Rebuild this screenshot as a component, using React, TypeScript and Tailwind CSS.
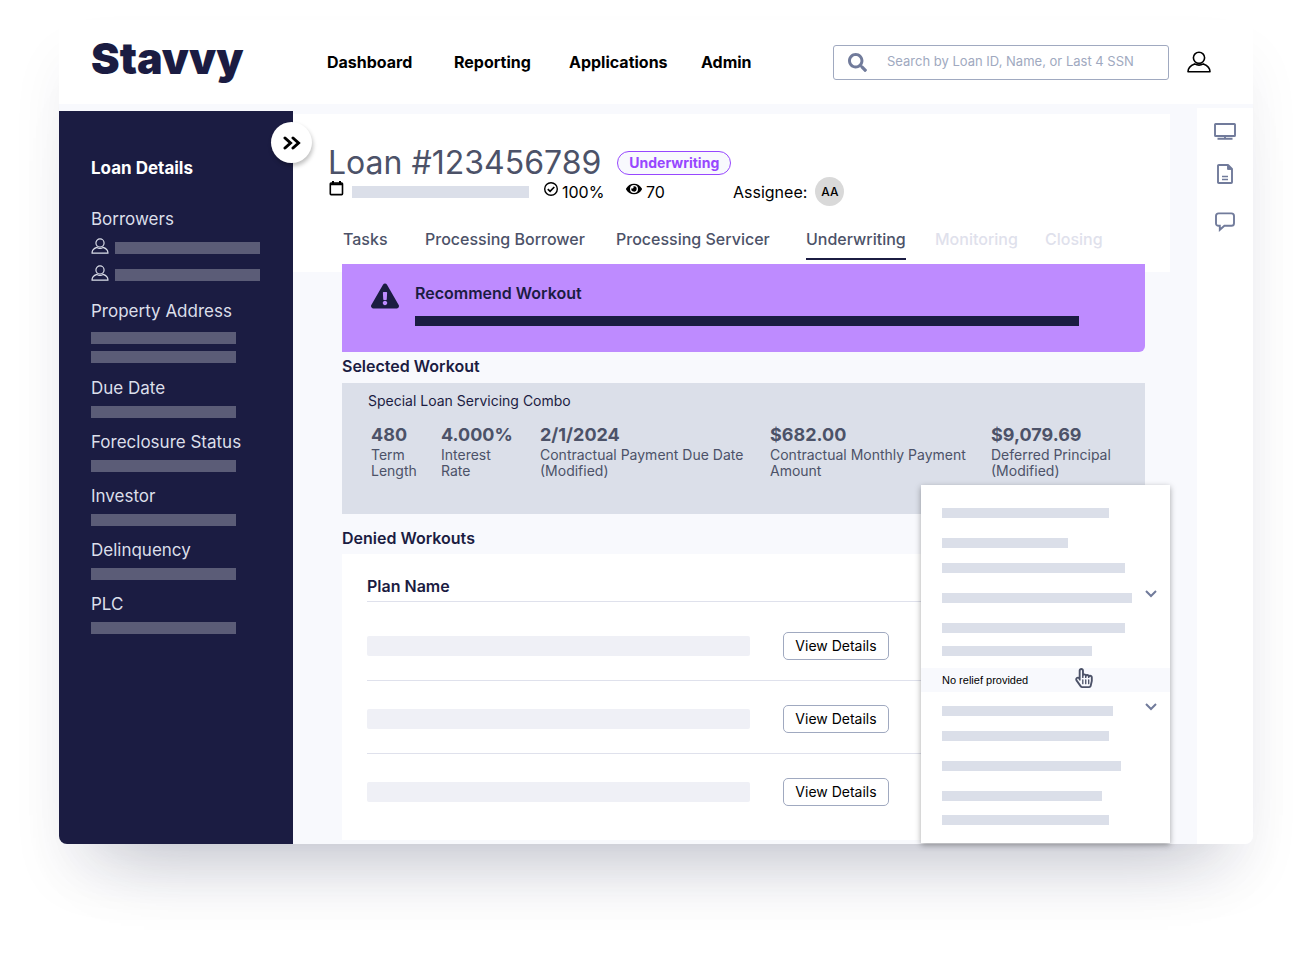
import { FaExclamationTriangle, FaEye, FaRegHandPointer, FaSearch } from 'react-icons/fa'

const navLinks = ['Dashboard', 'Reporting', 'Applications', 'Admin']

const sidebarFields = ['Due Date', 'Foreclosure Status', 'Investor', 'Delinquency', 'PLC']

const tabs = [
  { label: 'Tasks' },
  { label: 'Processing Borrower' },
  { label: 'Processing Servicer' },
  { label: 'Underwriting', active: true },
  { label: 'Monitoring', disabled: true },
  { label: 'Closing', disabled: true },
]

const stats = [
  { value: '480', label: ['Term', 'Length'] },
  { value: '4.000%', label: ['Interest', 'Rate'] },
  { value: '2/1/2024', label: ['Contractual Payment Due Date', '(Modified)'] },
  { value: '$682.00', label: ['Contractual Monthly Payment', 'Amount'] },
  { value: '$9,079.69', label: ['Deferred Principal', '(Modified)'] },
]

const PersonIcon = ({ className }: { className?: string }) => (
  <svg viewBox="0 0 24 22" fill="none" stroke="currentColor" strokeWidth="1.6" strokeLinejoin="round" className={className} aria-hidden="true">
    <circle cx="12" cy="6.8" r="5.6" />
    <path d="M1 20.8c0-4 3-6.6 6.6-7.9 2.6 1.5 6.2 1.5 8.8 0 3.6 1.3 6.6 3.9 6.6 7.9z" />
  </svg>
)

const ChevronIcon = () => (
  <svg viewBox="0 0 12 8" fill="none" stroke="currentColor" strokeWidth="2" className="h-2 w-3 text-[#717b9b]" aria-hidden="true">
    <path d="M1 1l5 5 5-5" />
  </svg>
)

const Header = () => (
  <header className="flex h-[84px] items-center bg-white pl-8">
    <a href="#home" className="w-[236px] shrink-0 pb-2 font-['Inter'] text-[43px] leading-[48px] font-black text-[#1b1c42]">
      Stavvy
    </a>
    <nav className="grid shrink-0 grid-cols-[127px_115px_132px_60px] text-base font-bold text-black">
      {navLinks.map((link) => (
        <a key={link} href={`#${link.toLowerCase()}`}>{link}</a>
      ))}
    </nav>
    <div className="ml-auto flex flex-1 items-center justify-end gap-[18px] pl-8 pr-[42px]">
      <label className="flex h-[35px] max-w-[336px] flex-1 items-center gap-5 rounded-[3px] border border-[#a0a9c0] px-3.5">
        <FaSearch className="h-[19px] w-[19px] shrink-0 text-[#717b9b]" />
        <input
          type="search"
          aria-label="Search"
          placeholder="Search by Loan ID, Name, or Last 4 SSN"
          className="min-w-0 flex-1 text-[13px] outline-none placeholder:text-[#a0a9c0]"
        />
      </label>
      <button type="button" aria-label="Account">
        <PersonIcon className="h-[22px] w-6 text-black" />
      </button>
    </div>
  </header>
)

const Sidebar = () => (
  <aside className="relative mt-[7px] w-[234px] shrink-0 rounded-bl-lg bg-[#1b1c42] px-8 pt-[45px] text-[#dcdfea]">
    <button
      type="button"
      aria-label="Expand"
      className="absolute top-[11px] -right-[19px] z-10 flex h-[41px] w-[41px] items-center justify-center rounded-full bg-white text-black shadow-[1px_3px_4px_rgba(0,0,0,0.25)]"
    >
      <svg viewBox="0 0 18 14" fill="none" stroke="currentColor" strokeWidth="3" strokeLinecap="round" className="h-3.5 w-[18px]">
        <path d="M2 2l5.5 5L2 12M10 2l5.5 5-5.5 5" />
      </svg>
    </button>
    <h2 className="mb-[27px] text-[17px] leading-6 font-bold text-white">Loan Details</h2>
    <h3 className="mb-[7px] text-[17px] leading-6">Borrowers</h3>
    <div className="mb-[18px] flex flex-col gap-[11px]">
      {[1, 2].map((n) => (
        <div key={n} className="flex h-4 items-end gap-1.5">
          <PersonIcon className="h-4 w-[18px] shrink-0" />
          <span className="h-3 w-[145px] shrink-0 bg-[#5b5c77]" />
        </div>
      ))}
    </div>
    <h3 className="mb-[9px] text-[17px] leading-6">Property Address</h3>
    <div className="mb-[13px] flex flex-col gap-[7px]">
      <span className="h-3 w-[145px] bg-[#5b5c77]" />
      <span className="h-3 w-[145px] bg-[#5b5c77]" />
    </div>
    {sidebarFields.map((field) => (
      <div key={field} className="mb-3">
        <h3 className="mb-1.5 text-[17px] leading-6 whitespace-nowrap">{field}</h3>
        <div className="h-3 w-[145px] bg-[#5b5c77]" />
      </div>
    ))}
  </aside>
)

const LoanHeader = () => (
  <section className="mt-2.5 mr-[27px] bg-white pt-[35px] pb-3">
    <div className="flex h-7 items-center gap-4 pl-[35px]">
      <h1 className="text-[32px] leading-7 text-[#4c5268]">Loan #123456789</h1>
      <span className="flex h-6 items-center rounded-full border border-[#9747ff] bg-[#f8f9fd] px-[11px] text-sm font-bold text-[#9747ff]">
        Underwriting
      </span>
    </div>
    <div className="flex h-[29px] items-center pl-[36px] text-base text-black">
      <svg viewBox="0 0 15 16" fill="none" stroke="currentColor" strokeWidth="1.6" className="mb-2 h-4 w-[15px]">
        <rect x="1.3" y="3" width="12.2" height="11.6" rx="0.8" />
        <path d="M1 4.2h13M4 1v2.5M11 1v2.5" strokeWidth="2" />
      </svg>
      <span className="ml-2 h-3 w-[177px] bg-[#dbdfe9]" />
      <svg viewBox="0 0 14 14" fill="none" stroke="currentColor" strokeWidth="1.4" className="mb-1.5 ml-[15px] h-3.5 w-3.5">
        <circle cx="7" cy="7" r="6.3" />
        <path d="M3.8 7.2l2.3 2.2 4.2-4.4" strokeWidth="1.7" />
      </svg>
      <span className="ml-1 w-16">100%</span>
      <FaEye className="mb-1.5 h-4 w-4" />
      <span className="ml-1 w-[87px]">70</span>
      <span>Assignee:</span>
      <span className="ml-2 flex h-[29px] w-[29px] items-center justify-center rounded-full bg-[#d9d9d9] text-xs font-medium">AA</span>
    </div>
    <nav className="mt-[21px] grid grid-cols-[82px_191px_190px_129px_110px_70px] pl-[50px] text-base leading-6 font-medium">
      {tabs.map((tab) => (
        <a
          key={tab.label}
          href="#tab"
          aria-disabled={tab.disabled}
          className={`justify-self-start whitespace-nowrap border-b-2 pb-[7px] ${tab.active ? 'border-[#1b1c42]' : 'border-transparent'} ${tab.disabled ? 'text-[#dfe1ec]' : 'text-[#4c5268]'}`}
        >
          {tab.label}
        </a>
      ))}
    </nav>
  </section>
)

const Workouts = () => (
  <div className="-mt-2 mb-1 flex flex-1 flex-col pr-[52px] pl-[49px] text-[#1b1c42]">
    <section className="flex rounded-br-md bg-[#be8bff] pt-[17px] pr-[66px] pb-[26px] pl-[29px]">
      <FaExclamationTriangle className="mt-px h-7 w-7 shrink-0" />
      <div className="ml-4 flex-1">
        <h2 className="mb-[11px] text-base leading-6 font-semibold">Recommend Workout</h2>
        <div className="h-2.5 bg-[#1b1c42]" />
      </div>
    </section>

    <h2 className="mt-0.5 mb-[5px] text-base leading-6 font-semibold">Selected Workout</h2>
    <section className="bg-[#dbdfe9] pt-2 pb-[35px] pl-[26px]">
      <p className="mb-3.5 text-sm">Special Loan Servicing Combo</p>
      <dl className="grid grid-cols-[70px_99px_230px_221px_auto] pl-[3px] text-sm leading-4 text-[#4c5268]">
        {stats.map((stat) => (
          <div key={stat.value} className="flex flex-col-reverse gap-0.5 whitespace-nowrap">
            <dt>
              {stat.label[0]}
              <br />
              {stat.label[1]}
            </dt>
            <dd className="text-lg leading-5 font-bold">{stat.value}</dd>
          </div>
        ))}
      </dl>
    </section>

    <h2 className="mt-3 mb-1 text-base leading-6 font-semibold">Denied Workouts</h2>
    <section className="flex-1 bg-white px-[25px] pt-5 pb-3.5">
      <table className="w-full text-left">
        <thead>
          <tr className="border-b border-[#dfe1ec]">
            <th className="pb-[3px] text-base leading-6 font-semibold" colSpan={2}>Plan Name</th>
          </tr>
        </thead>
        <tbody>
          {[1, 2, 3].map((row) => (
            <tr key={row} className="group border-b border-[#dfe1ec] last:border-0">
              <td className="w-[416px] pt-6 pb-5 group-first:pt-[30px]">
                <div className="h-5 w-[383px] rounded-xs bg-[#eff0f6]" />
              </td>
              <td className="pt-6 pb-5 group-first:pt-[30px]">
                <button type="button" className="block h-7 w-[106px] rounded-[5px] border border-[#a0a9c0] text-sm whitespace-nowrap text-black">
                  View Details
                </button>
              </td>
            </tr>
          ))}
        </tbody>
      </table>
    </section>
  </div>
)

const ReliefMenu = () => (
  <div className="absolute right-[27px] bottom-px flex w-[249px] flex-col bg-white pt-[23px] pb-[18px] shadow-[0_2px_6px_rgba(0,0,0,0.35)]">
    <div className="ml-[21px] h-2.5 w-[167px] bg-[#dbdfe9]" />
    <div className="mt-5 ml-[21px] h-2.5 w-[126px] bg-[#dbdfe9]" />
    <div className="mt-[15px] ml-[21px] h-2.5 w-[183px] bg-[#dbdfe9]" />
    <div className="mt-5 ml-[21px] flex h-2.5 justify-between pr-[13px]">
      <div className="w-[190px] bg-[#dbdfe9]" />
      <div className="-mt-[3px]"><ChevronIcon /></div>
    </div>
    <div className="mt-5 ml-[21px] h-2.5 w-[183px] bg-[#dbdfe9]" />
    <div className="mt-[13px] ml-[21px] h-2.5 w-[150px] bg-[#dbdfe9]" />
    <button type="button" className="mt-3 flex h-6 items-center justify-between bg-[#f8f9fd] pr-[77px] pl-[21px] font-['Liberation_Sans'] text-[11px] text-black">
      No relief provided
      <FaRegHandPointer className="mb-1 h-5 w-[18px] text-[#4c5268]" />
    </button>
    <div className="mt-3.5 ml-[21px] flex h-2.5 justify-between pr-[13px]">
      <div className="w-[171px] bg-[#dbdfe9]" />
      <div className="-mt-[3px]"><ChevronIcon /></div>
    </div>
    <div className="mt-[15px] ml-[21px] h-2.5 w-[167px] bg-[#dbdfe9]" />
    <div className="mt-5 ml-[21px] h-2.5 w-[179px] bg-[#dbdfe9]" />
    <div className="mt-5 ml-[21px] h-2.5 w-[160px] bg-[#dbdfe9]" />
    <div className="mt-3.5 ml-[21px] h-2.5 w-[167px] bg-[#dbdfe9]" />
  </div>
)

const ToolRail = () => (
  <aside className="mt-1 flex w-14 shrink-0 flex-col items-center rounded-br-lg bg-white pt-[15px] text-[#717b9b]">
    <button type="button" aria-label="Screen">
      <svg viewBox="0 0 22 17" fill="none" stroke="currentColor" strokeWidth="1.9" className="h-[17px] w-[22px]">
        <rect x="1" y="1" width="20" height="12" rx="0.6" />
        <path d="M11 13v2.4M3.5 15.8h15" />
      </svg>
    </button>
    <button type="button" aria-label="Documents" className="mt-6">
      <svg viewBox="0 0 16 20" fill="none" stroke="currentColor" strokeWidth="1.9" strokeLinejoin="round" className="h-5 w-4">
        <path d="M1 1.8Q1 1 1.8 1H11l4 4v13.2q0 .8-.8.8H1.8q-.8 0-.8-.8z" />
        <path d="M10.6 1v4.4H15z" fill="currentColor" strokeWidth="1" />
        <path d="M5 12.5h6M5 15.5h6" strokeWidth="1.3" />
      </svg>
    </button>
    <button type="button" aria-label="Messages" className="mt-7">
      <svg viewBox="0 0 20 20" fill="none" stroke="currentColor" strokeWidth="1.9" className="h-5 w-5">
        <path d="M3.6 1.4h12.8q2.6 0 2.6 2.6v7.2q0 2.6-2.6 2.6H9.4l-4.6 4v-4H3.6Q1 13.8 1 11.2V4q0-2.6 2.6-2.6z" />
      </svg>
    </button>
  </aside>
)

const App = () => {
  return (
    <div className="min-h-screen bg-white pt-5 pr-[62px] pb-[114px] pl-[59px] font-['Inter',sans-serif]">
      <div className="flex flex-col rounded-lg bg-[#f8f9fd] shadow-[0_36px_60px_-6px_rgba(27,28,66,0.07),0_56px_70px_-50px_rgba(27,35,70,0.26)]">
        <Header />
        <div className="flex">
          <Sidebar />
          <main className="relative flex min-w-0 flex-1 flex-col">
            <LoanHeader />
            <Workouts />
            <ReliefMenu />
          </main>
          <ToolRail />
        </div>
      </div>
    </div>
  )
}

export default App
